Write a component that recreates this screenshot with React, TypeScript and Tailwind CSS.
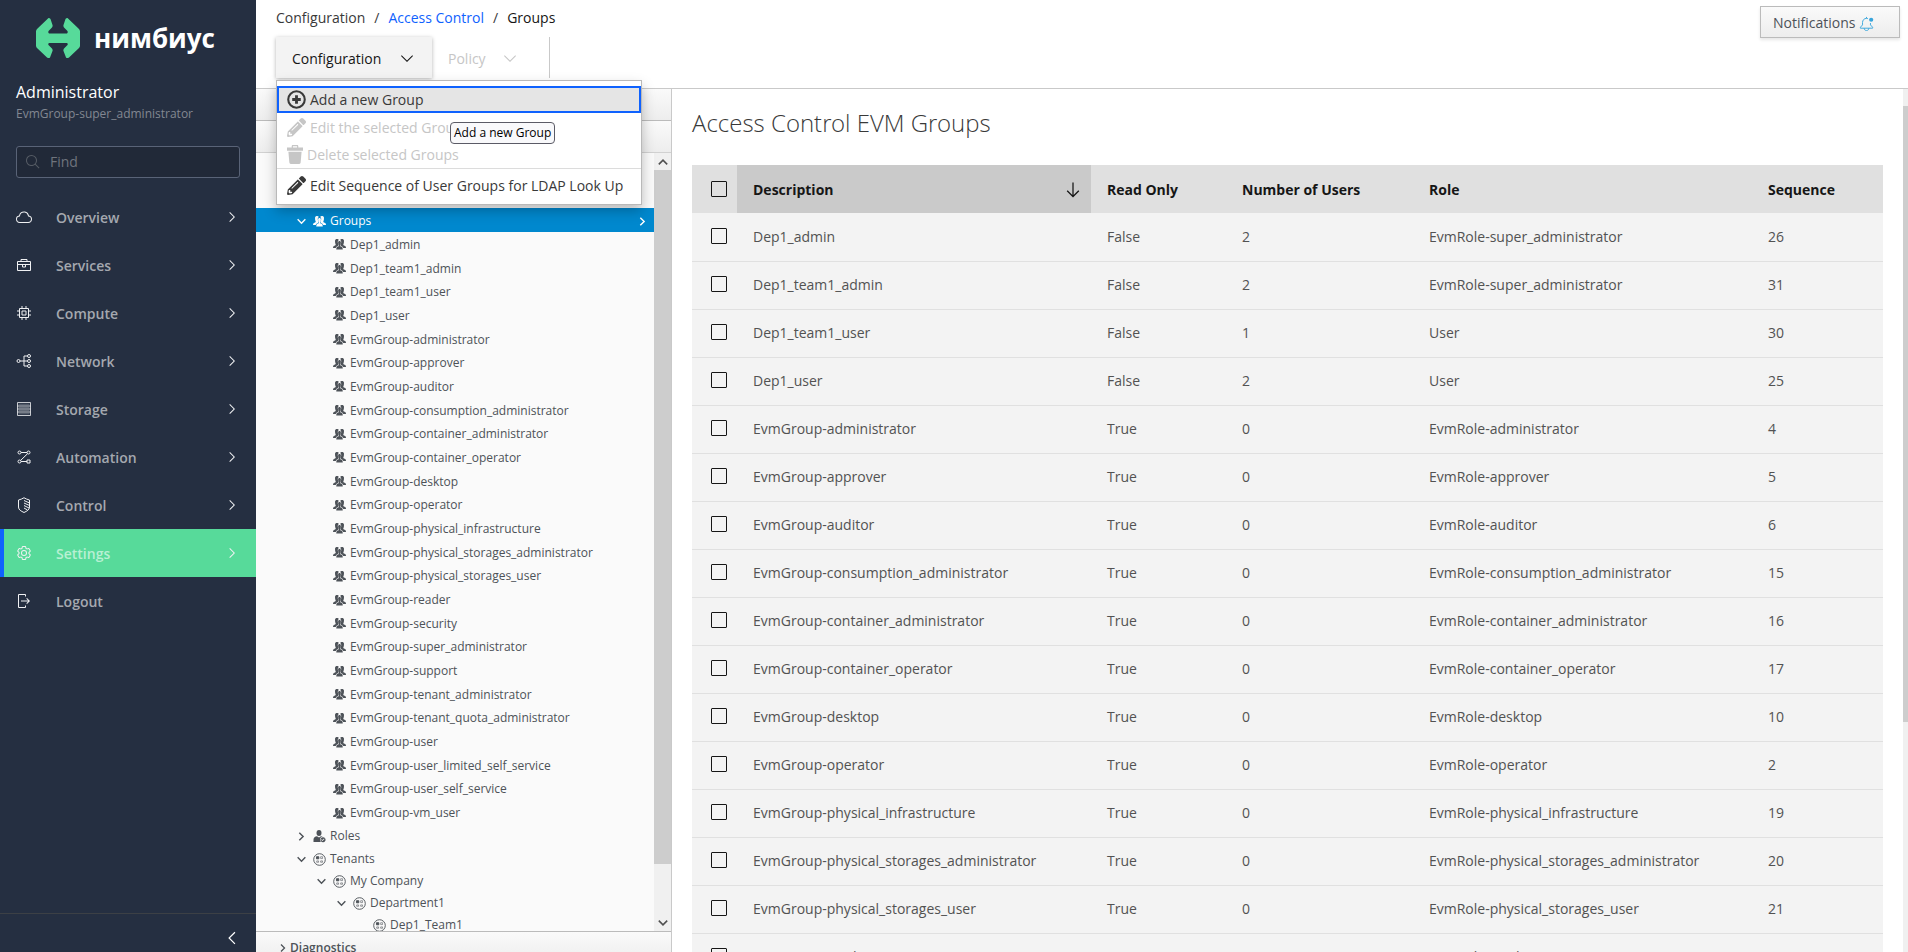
import React from 'react';
import { FaPencilAlt } from 'react-icons/fa';

type IconProps = { className?: string };

const CloudIcon = ({ className }: IconProps) => (
  <svg viewBox="0 0 32 32" fill="currentColor" className={className} aria-hidden="true">
    <path d="M16,7h0a7.66,7.66,0,0,1,1.51.15,8,8,0,0,1,6.35,6.34l.26,1.35,1.35.24a5.5,5.5,0,0,1-1,10.92H7.5a5.5,5.5,0,0,1-1-10.92l1.34-.24.26-1.35A8,8,0,0,1,16,7m0-2a10,10,0,0,0-9.83,8.12A7.5,7.5,0,0,0,7.49,28h17a7.5,7.5,0,0,0,1.32-14.88,10,10,0,0,0-7.94-7.94A10.27,10.27,0,0,0,16,5Z" />
  </svg>
);

const ToolboxIcon = ({ className }: IconProps) => (
  <svg viewBox="0 0 32 32" fill="none" stroke="currentColor" strokeWidth="2" className={className} aria-hidden="true">
    <path d="M3 9h26v18H3zM10 9V5h12v4M3 15h26M13 15v5h6v-5" />
  </svg>
);

const ChipIcon = ({ className }: IconProps) => (
  <svg viewBox="0 0 32 32" fill="none" stroke="currentColor" strokeWidth="2" className={className} aria-hidden="true">
    <path d="M7 7h18v18H7zM12 12h8v8h-8zM12 2v5M20 2v5M12 25v5M20 25v5M2 12h5M2 20h5M25 12h5M25 20h5" />
  </svg>
);

const NetworkIcon = ({ className }: IconProps) => (
  <svg viewBox="0 0 32 32" fill="none" stroke="currentColor" strokeWidth="2" className={className} aria-hidden="true">
    <circle cx="5" cy="16" r="3" />
    <circle cx="26" cy="6" r="3" />
    <circle cx="26" cy="16" r="3" />
    <circle cx="26" cy="26" r="3" />
    <path d="M8 16h15M23 6h-7v20h7" />
  </svg>
);

const StorageIcon = ({ className }: IconProps) => (
  <svg viewBox="0 0 32 32" fill="none" stroke="currentColor" strokeWidth="2" className={className} aria-hidden="true">
    <path d="M3 3h26v26H3zM3 10h26M3 16h26M3 22h26" opacity=".8" />
    <path d="M5 6.500h22M5 13h22M5 19h22M5 25.500h22" opacity=".3" />
  </svg>
);

const FlowIcon = ({ className }: IconProps) => (
  <svg viewBox="0 0 32 32" fill="none" stroke="currentColor" strokeWidth="2" className={className} aria-hidden="true">
    <circle cx="7" cy="7" r="3" />
    <circle cx="25" cy="7" r="3" />
    <circle cx="7" cy="25" r="3" />
    <path d="M10 7h12M10 25h12M23 9.500L9 23M22 22h6v6h-6z" />
  </svg>
);

const ShieldIcon = ({ className }: IconProps) => (
  <svg viewBox="0 0 32 32" fill="none" stroke="currentColor" strokeWidth="2" className={className} aria-hidden="true">
    <path d="M16 1.500c3 2 7 3.500 11 4.500v14c0 6-5 8-11 11C10 28 5 26 5 20V6c4-1 8-2.500 11-4.500z" />
    <path d="M16 7l11 5M16 12l11 5M16 17l10 5M16 22l7 4" />
  </svg>
);

const GearIcon = ({ className }: IconProps) => (
  <svg viewBox="0 0 32 32" fill="currentColor" className={className} aria-hidden="true">
    <path d="M27,16.76c0-.25,0-.5,0-.76s0-.51,0-.77l1.92-1.68A2,2,0,0,0,29.3,11L26.94,7a2,2,0,0,0-1.73-1,2,2,0,0,0-.64.1l-2.43.82a11.35,11.35,0,0,0-1.31-.75l-.51-2.52a2,2,0,0,0-2-1.61H13.64a2,2,0,0,0-2,1.61l-.51,2.52a11.48,11.48,0,0,0-1.32.75L7.43,6.06A2,2,0,0,0,6.79,6,2,2,0,0,0,5.06,7L2.7,11a2,2,0,0,0,.41,2.51L5,15.24c0,.25,0,.5,0,.76s0,.51,0,.77L3.11,18.45A2,2,0,0,0,2.7,21L5.06,25a2,2,0,0,0,1.73,1,2,2,0,0,0,.64-.1l2.43-.82a11.35,11.35,0,0,0,1.31.75l.51,2.52a2,2,0,0,0,2,1.61h4.72a2,2,0,0,0,2-1.61l.51-2.52a11.48,11.48,0,0,0,1.32-.75l2.42.82a2,2,0,0,0,.64.1,2,2,0,0,0,1.73-1L29.3,21a2,2,0,0,0-.41-2.51ZM25.21,24l-3.43-1.16a8.86,8.86,0,0,1-2.71,1.57L18.36,28H13.64l-.71-3.55a9.36,9.36,0,0,1-2.7-1.57L6.79,24,4.43,20l2.72-2.4a8.9,8.9,0,0,1,0-3.13L4.43,12,6.79,8l3.43,1.16a8.86,8.86,0,0,1,2.71-1.57L13.64,4h4.72l.71,3.55a9.36,9.36,0,0,1,2.7,1.57L25.21,8,27.57,12l-2.72,2.4a8.9,8.9,0,0,1,0,3.13L27.57,20Z" />
    <path d="M16,22a6,6,0,1,1,6-6A5.94,5.94,0,0,1,16,22Zm0-10a3.91,3.91,0,0,0-4,4,3.91,3.91,0,0,0,4,4,3.91,3.91,0,0,0,4-4A3.91,3.91,0,0,0,16,12Z" />
  </svg>
);

const LogoutIcon = ({ className }: IconProps) => (
  <svg viewBox="0 0 32 32" fill="currentColor" className={className} aria-hidden="true">
    <path d="M6,30H18a2,2,0,0,0,2-2V25H18v3H6V4H18V7h2V4a2,2,0,0,0-2-2H6A2,2,0,0,0,4,4V28A2,2,0,0,0,6,30Z" />
    <path d="M20.586 20.586L24.172 17 10 17 10 15 24.172 15 20.586 11.414 22 10 28 16 22 22 20.586 20.586z" />
  </svg>
);

const SearchIcon = ({ className }: IconProps) => (
  <svg viewBox="0 0 32 32" fill="currentColor" className={className} aria-hidden="true">
    <path d="M29,27.586l-7.552-7.552a11.018,11.018,0,1,0-1.414,1.414L27.586,29ZM4,13a9,9,0,1,1,9,9A9.01,9.01,0,0,1,4,13Z" />
  </svg>
);

const ChevronRight = ({ className }: IconProps) => (
  <svg viewBox="0 0 32 32" fill="currentColor" className={className} aria-hidden="true">
    <path d="M22 16L12 26 10.6 24.6 19.2 16 10.6 7.4 12 6z" />
  </svg>
);

const ChevronLeft = ({ className }: IconProps) => (
  <svg viewBox="0 0 32 32" fill="currentColor" className={className} aria-hidden="true">
    <path d="M10 16L20 6 21.4 7.4 12.8 16 21.4 24.6 20 26z" />
  </svg>
);

const ChevronDown = ({ className }: IconProps) => (
  <svg viewBox="0 0 16 16" fill="currentColor" className={className} aria-hidden="true">
    <path d="M8 11L2 5 2.700 4.300 8 9.600 13.300 4.300 14 5z" />
  </svg>
);

const ArrowDown = ({ className }: IconProps) => (
  <svg viewBox="0 0 32 32" fill="currentColor" className={className} aria-hidden="true">
    <path d="M24.59 16.59L17 24.17 17 4 15 4 15 24.17 7.41 16.59 6 18 16 28 26 18 24.59 16.59z" />
  </svg>
);

// Small bold angle used by the tree, the accordion and the scrollbars
const Angle = ({ className }: IconProps) => (
  <svg viewBox="0 0 10 10" fill="none" stroke="currentColor" strokeWidth="1.3" className={className} aria-hidden="true">
    <path d="M3 1.500L6.500 5 3 8.500" />
  </svg>
);

const BellIcon = ({ className }: IconProps) => (
  <svg viewBox="0 0 32 32" fill="none" stroke="currentColor" strokeWidth="2" className={className} aria-hidden="true">
    <path d="M19 5.600C18 5.200 17 5 16 5c-5 0-8.500 4-8.500 9v5L3 24v2h26v-2l-4.500-5v-4" />
    <path d="M11 26c0 3 2 5 5 5s5-2 5-5M16 5V2" />
    <circle cx="26" cy="8" r="4.500" fill="currentColor" stroke="none" />
  </svg>
);

const GroupIcon = ({ className }: IconProps) => (
  <svg viewBox="0 0 26 22" fill="currentColor" className={className} aria-hidden="true">
    <path d="M4 4c0-3 2-4 4-4 1.500 0 3 .7 3.600 2C10 3 9.400 4.600 9.600 7c.1 1.700.8 3 1.600 4-.2 2-.6 2.800-2 3.400-2 .9-3.200 1.600-3.700 3.600H0c0-3 1-4 3-4.700 1.500-.5 2.500-1 2.500-2C4.400 9.500 4 7 4 4z" />
    <path d="M22 4c0-3-2-4-4-4-1.500 0-3 .7-3.600 2C16 3 16.600 4.600 16.400 7c-.1 1.700-.8 3-1.600 4 .2 2 .6 2.800 2 3.400 2 .9 3.200 1.600 3.700 3.600H26c0-3-1-4-3-4.700-1.500-.5-2.500-1-2.500-2C21.600 9.500 22 7 22 4z" />
    <path d="M13 4c1.800 0 2.800 1.200 2.800 3.500 0 2-.6 3.700-1.600 4.800 0 2 .8 2.600 2.300 3.200 2 .8 3 2 3 5.500h-13c0-3.500 1-4.700 3-5.500 1.500-.6 2.300-1.200 2.300-3.200-1-1.100-1.600-2.800-1.600-4.800C10.200 5.200 11.200 4 13 4z" />
  </svg>
);

const RoleIcon = ({ className }: IconProps) => (
  <svg viewBox="0 0 24 26" fill="currentColor" className={className} aria-hidden="true">
    <ellipse cx="11" cy="6" rx="5" ry="6" />
    <path d="M0 24v-5c0-3.500 3-6 7-6.500l4 2.500 4-2.500c1.400.2 2.600.6 3.700 1.200-3.500.3-5.700 2.300-5.700 5.300 0 2 .7 3.800 2 5z" />
    <path d="M19 14.500a5 5 0 1 0 .1 0zm-1 7.500l-2.500-2.500 1-1 1.500 1.500 3-3 1 1z" fillRule="evenodd" />
  </svg>
);

const TenantIcon = ({ className }: IconProps) => (
  <svg viewBox="0 0 28 28" fill="none" stroke="currentColor" strokeWidth="2" className={className} aria-hidden="true">
    <circle cx="14" cy="14" r="12.500" />
    <path d="M7.500 8h5v4.500h-5z" fill="currentColor" />
    <path d="M16.500 8h4v4h-4zM8 17h4v3H8zM16.500 17h4v3h-4z" strokeWidth="1.200" />
  </svg>
);

const AddCircleIcon = ({ className }: IconProps) => (
  <svg viewBox="0 0 20 20" fill="none" stroke="currentColor" className={className} aria-hidden="true">
    <circle cx="10" cy="10" r="8.700" strokeWidth="2.200" />
    <path d="M10 5.500v9M5.500 10h9" strokeWidth="3" />
  </svg>
);

const TrashIcon = ({ className }: IconProps) => (
  <svg viewBox="0 0 17 20" fill="currentColor" className={className} aria-hidden="true">
    <path d="M0 2.500h5V1.200C5 .5 5.500 0 6.200 0h4.600c.7 0 1.200.5 1.200 1.200v1.300h5V6H0zM6.300 1.300v1.200h4.400V1.300z" fillRule="evenodd" />
    <path d="M1.500 7h14l-1 11.500c-.1.900-.7 1.500-1.500 1.500H4c-.8 0-1.400-.6-1.500-1.500z" />
  </svg>
);

const menu = [
  { label: 'Overview', icon: CloudIcon },
  { label: 'Services', icon: ToolboxIcon },
  { label: 'Compute', icon: ChipIcon },
  { label: 'Network', icon: NetworkIcon },
  { label: 'Storage', icon: StorageIcon },
  { label: 'Automation', icon: FlowIcon },
  { label: 'Control', icon: ShieldIcon },
  { label: 'Settings', icon: GearIcon, active: true },
  { label: 'Logout', icon: LogoutIcon, leaf: true },
];

const groups = [
  'Dep1_admin',
  'Dep1_team1_admin',
  'Dep1_team1_user',
  'Dep1_user',
  'EvmGroup-administrator',
  'EvmGroup-approver',
  'EvmGroup-auditor',
  'EvmGroup-consumption_administrator',
  'EvmGroup-container_administrator',
  'EvmGroup-container_operator',
  'EvmGroup-desktop',
  'EvmGroup-operator',
  'EvmGroup-physical_infrastructure',
  'EvmGroup-physical_storages_administrator',
  'EvmGroup-physical_storages_user',
  'EvmGroup-reader',
  'EvmGroup-security',
  'EvmGroup-super_administrator',
  'EvmGroup-support',
  'EvmGroup-tenant_administrator',
  'EvmGroup-tenant_quota_administrator',
  'EvmGroup-user',
  'EvmGroup-user_limited_self_service',
  'EvmGroup-user_self_service',
  'EvmGroup-vm_user',
];

const rows = [
  ['Dep1_admin', 'False', '2', 'EvmRole-super_administrator', '26'],
  ['Dep1_team1_admin', 'False', '2', 'EvmRole-super_administrator', '31'],
  ['Dep1_team1_user', 'False', '1', 'User', '30'],
  ['Dep1_user', 'False', '2', 'User', '25'],
  ['EvmGroup-administrator', 'True', '0', 'EvmRole-administrator', '4'],
  ['EvmGroup-approver', 'True', '0', 'EvmRole-approver', '5'],
  ['EvmGroup-auditor', 'True', '0', 'EvmRole-auditor', '6'],
  ['EvmGroup-consumption_administrator', 'True', '0', 'EvmRole-consumption_administrator', '15'],
  ['EvmGroup-container_administrator', 'True', '0', 'EvmRole-container_administrator', '16'],
  ['EvmGroup-container_operator', 'True', '0', 'EvmRole-container_operator', '17'],
  ['EvmGroup-desktop', 'True', '0', 'EvmRole-desktop', '10'],
  ['EvmGroup-operator', 'True', '0', 'EvmRole-operator', '2'],
  ['EvmGroup-physical_infrastructure', 'True', '0', 'EvmRole-physical_infrastructure', '19'],
  ['EvmGroup-physical_storages_administrator', 'True', '0', 'EvmRole-physical_storages_administrator', '20'],
  ['EvmGroup-physical_storages_user', 'True', '0', 'EvmRole-physical_storages_user', '21'],
  ['EvmGroup-reader', 'True', '0', 'EvmRole-reader', ''],
];

const Sidebar: React.FC = () => (
  <aside className="flex w-64 shrink-0 flex-col bg-[#252f41]">
    <div className="flex items-center gap-[14px] pl-9 pt-[18px]">
      <svg viewBox="0 0 44 40" className="h-10 w-11" fill="#57da9a" aria-hidden="true">
        <path d="M12.500 0q1.500 0 2 1l2 6q.5 1.700-1 3L13 12.500q-1.500 1.500 0 3h18q1.500-1.500 0-3L28.500 10q-1.500-1.300-1-3l2-6q.5-1 2-1L43 11q1 1 1 2.500v14q0 1.500-1 2.500L33 39.500q-2 1-3 0l-2.500-6.500q-.5-1.700 1-3l2.500-2.500q1.500-1.500 0-2.500H13q-1.500 1 0 2.500l2.500 2.500q1.500 1.300 1 3L14 39.500q-1 1-3 0L1 30q-1-1-1-2.500v-14Q0 12 1 11z" />
      </svg>
      <span className="text-[26px] leading-10 font-bold text-white">нимбиус</span>
    </div>

    <div className="mt-5 px-4">
      <p className="text-base leading-7 text-white">Administrator</p>
      <p className="text-xs leading-4 text-[#828791]">EvmGroup-super_administrator</p>
    </div>

    <label className="mx-4 mt-6 flex h-8 items-center gap-[9px] rounded-[3px] border border-[#596377] bg-[#212938] px-2">
      <SearchIcon className="h-4 w-4 shrink-0 text-[#555b64]" />
      <input
        type="search"
        aria-label="Find"
        placeholder="Find"
        className="w-full bg-transparent text-sm outline-none placeholder:text-[#6f747d]"
      />
    </label>

    <nav className="mt-[15px]">
      {menu.map(({ label, icon: Icon, active, leaf }) => (
        <a
          key={label}
          href="#"
          className={
            active
              ? 'flex h-12 items-center border-l-4 border-[#0f62fe] bg-[#57da9a] pr-4 pl-3 text-[#b8f0d3]'
              : 'flex h-12 items-center pr-4 pl-4 text-[#a4a8af]'
          }
        >
          <Icon className="h-4 w-4 text-[#f0f1f3]" />
          <span className="ml-6 flex-1 pt-0.5 text-sm font-semibold">{label}</span>
          {!leaf && <ChevronRight className="h-4 w-4 text-[#f0f1f3]" />}
        </a>
      ))}
    </nav>

    <button type="button" aria-label="Collapse menu" className="mt-auto flex h-[39px] items-center justify-end border-t border-[#3c4045] pt-2.5 pr-[14px] text-white">
      <ChevronLeft className="h-5 w-5" />
    </button>
  </aside>
);

const ConfigurationMenu: React.FC = () => (
  <div className="absolute top-full left-0 z-10 mt-0.5 flex w-[366px] flex-col border border-[#b9b9b9] bg-white pt-[5px] text-sm text-[#393939] shadow-[0_6px_12px_rgba(0,0,0,0.25)]">
    <button type="button" className="flex h-[27px] items-center gap-1 border-2 border-[#0f62fe] bg-[#e5e5e5] px-2">
      <AddCircleIcon className="h-[19px] w-[19px]" />
      Add a new Group
    </button>
    <button type="button" disabled className="mt-px flex h-[27px] items-center gap-1 px-[10px] text-[#c6c6c6]">
      <FaPencilAlt className="h-[19px] w-[19px]" />
      Edit the selected Group
    </button>
    <button type="button" disabled className="flex h-[27px] items-center gap-1 px-[10px] text-[#c6c6c6]">
      <TrashIcon className="h-[19px] w-4" />
      Delete selected Groups
    </button>
    <div className="border-t border-[#dcdcdc] pt-[3px] pb-[5px]">
      <button type="button" className="flex h-[27px] items-center gap-1 px-[10px]">
        <FaPencilAlt className="h-[19px] w-[19px]" />
        Edit Sequence of User Groups for LDAP Look Up
      </button>
    </div>
    <span role="tooltip" className="absolute top-[41px] left-[173px] rounded border border-[#5b5b66] bg-[#f9f9fb] px-[3px] text-xs leading-5 whitespace-nowrap text-black">
      Add a new Group
    </span>
  </div>
);

const Header: React.FC = () => (
  <header className="flex h-[89px] shrink-0 items-start justify-between border-b border-[#c9c9c9] bg-white pl-5">
    <div>
      <nav aria-label="Breadcrumb" className="flex h-[37px] items-center gap-[9px] pb-0.5 text-sm text-[#393939]">
        <span>Configuration</span>
        <span>/</span>
        <a href="#" className="text-[#0f62fe]">
          Access Control
        </a>
        <span>/</span>
        <span className="text-[#161616]">Groups</span>
      </nav>
      <div className="flex h-[41px] w-[274px] items-stretch border-r border-[#c9c9c9] text-sm">
        <div className="relative flex">
          <button type="button" className="flex w-[156px] items-center justify-between bg-[#f3f3f3] pt-0.5 pr-[17px] pl-4 text-[#161616] shadow-[0_1px_4px_rgba(0,0,0,0.3)]">
            Configuration
            <ChevronDown className="h-4 w-4" />
          </button>
          <ConfigurationMenu />
        </div>
        <button type="button" disabled className="flex w-[102px] items-center justify-between px-4 pt-0.5 text-[#c6c6c6]">
          Policy
          <ChevronDown className="h-4 w-4" />
        </button>
      </div>
    </div>
    <button type="button" className="mt-1.5 mr-2 flex h-8 w-[140px] items-center gap-1 border border-[#bbb] bg-linear-to-b from-[#fafafa] to-[#ededed] px-3 pt-0.5 text-sm text-[#4d5258] shadow-[0_2px_3px_rgba(3,3,3,0.1)]">
      Notifications
      <BellIcon className="h-[15px] w-[15px] text-[#39a5dc]" />
    </button>
  </header>
);

const Tree: React.FC = () => (
  <section className="flex w-[416px] shrink-0 flex-col border-r border-[#c9c9c9] bg-[#fafafa] text-xs text-[#4d5258]">
    <div className="h-8 shrink-0 border-b border-[#bbb] bg-linear-to-b from-[#fafafa] to-[#ededed]" />
    <div className="h-8 shrink-0 border-b border-[#d1d1d1] bg-linear-to-b from-[#fafafa] to-[#ededed]" />

    <div className="flex min-h-0 flex-1">
      <div className="min-w-0 flex-1 overflow-hidden pt-[55px]">
        <div className="flex h-6 items-center bg-[#0088ce] pt-0.5 pr-1.5 pl-10 text-white">
          <Angle className="mr-1.5 h-[11px] w-[11px] rotate-90" />
          <GroupIcon className="mr-1 h-[11px] w-[13px]" />
          <span className="flex-1">Groups</span>
          <Angle className="h-[11px] w-[11px]" />
        </div>
        <ul className="grid h-[592px] auto-rows-fr">
          {groups.map((name) => (
            <li key={name} className="flex items-center gap-1 pt-0.5 pl-[77px]">
              <GroupIcon className="h-[11px] w-[13px]" />
              {name}
            </li>
          ))}
        </ul>
        <div className="flex h-6 items-center pl-10">
          <Angle className="mr-1.5 h-[11px] w-[11px]" />
          <RoleIcon className="mr-1 h-[13px] w-[13px]" />
          Roles
        </div>
        <div className="flex h-[22px] items-center pl-10">
          <Angle className="mr-1.5 h-[11px] w-[11px] rotate-90" />
          <TenantIcon className="mr-1 h-[13px] w-[13px]" />
          Tenants
        </div>
        <div className="flex h-[22px] items-center pl-[60px]">
          <Angle className="mr-1.5 h-[11px] w-[11px] rotate-90" />
          <TenantIcon className="mr-1 h-[13px] w-[13px]" />
          My Company
        </div>
        <div className="flex h-[22px] items-center pl-20">
          <Angle className="mr-1.5 h-[11px] w-[11px] rotate-90" />
          <TenantIcon className="mr-1 h-[13px] w-[13px]" />
          Department1
        </div>
        <div className="flex h-[22px] items-center pl-[117px]">
          <TenantIcon className="mr-1 h-[13px] w-[13px]" />
          Dep1_Team1
        </div>
      </div>

      <div className="flex w-[17px] flex-col items-center bg-[#f0f0f0] text-[#505050]">
        <div className="flex h-[17px] items-center">
          <Angle className="h-3 w-3 -rotate-90" />
        </div>
        <div className="w-full flex-[694] bg-[#cdcdcd]" />
        <div className="flex-[50]" />
        <div className="flex h-[17px] items-center">
          <Angle className="h-3 w-3 rotate-90" />
        </div>
      </div>
    </div>

    <div className="h-[21px] shrink-0">
      <button type="button" className="flex h-8 w-full items-center gap-0.5 border-t border-[#bbb] bg-linear-to-b from-[#fafafa] to-[#ededed] pl-[22px] font-semibold">
        <Angle className="h-[10px] w-[10px]" />
        Diagnostics
      </button>
    </div>
  </section>
);

const Checkbox = ({ label }: { label: string }) => (
  <input
    type="checkbox"
    aria-label={label}
    className="block h-4 w-4 appearance-none rounded-[1px] border border-[#161616]"
  />
);

const GroupsTable: React.FC = () => (
  <section className="min-w-0 flex-1 overflow-hidden bg-white px-5">
    <h1 className="pt-[18px] font-['Open_Sans_Light','Open_Sans',sans-serif] text-2xl leading-8 font-light text-[#393939]">
      Access Control EVM Groups
    </h1>
    <table className="mt-[26px] w-full table-fixed text-left text-sm">
      <colgroup>
        <col className="w-[45px]" />
        <col />
        <col className="w-[135px]" />
        <col className="w-[187px]" />
        <col className="w-[339px]" />
        <col className="w-[131px]" />
      </colgroup>
      <thead>
        <tr className="h-12 bg-[#e0e0e0] text-[#161616]">
          <th className="pl-[19px]">
            <Checkbox label="Select all" />
          </th>
          <th className="bg-[#cacaca] px-4 pt-0.5" aria-sort="ascending">
            <div className="flex items-center justify-between">
              Description
              <ArrowDown className="-mr-2 h-5 w-5" />
            </div>
          </th>
          <th className="px-4 pt-0.5">Read Only</th>
          <th className="px-4 pt-0.5">Number of Users</th>
          <th className="px-4 pt-0.5">Role</th>
          <th className="px-4 pt-0.5">Sequence</th>
        </tr>
      </thead>
      <tbody>
        {rows.map(([name, readOnly, users, role, sequence]) => (
          <tr key={name} className="h-12 border-b border-[#e0e0e0] bg-[#f3f3f3] text-[#525252]">
            <td className="pb-0.5 pl-[19px]">
              <Checkbox label={name} />
            </td>
            <td className="px-4">{name}</td>
            <td className="px-4">{readOnly}</td>
            <td className="px-4">{users}</td>
            <td className="px-4">{role}</td>
            <td className="px-4">{sequence}</td>
          </tr>
        ))}
      </tbody>
    </table>
  </section>
);

const App: React.FC = () => {
  return (
    <div className="flex h-screen overflow-hidden font-['Open_Sans',sans-serif]">
      <Sidebar />
      <main className="flex min-w-0 flex-1 flex-col">
        <Header />
        <div className="flex min-h-0 flex-1">
          <Tree />
          <GroupsTable />
          <div className="flex w-[5px] shrink-0 flex-col bg-[#f0f0f0] pt-[17px]">
            <div className="flex-[616] bg-[#cdcdcd]" />
            <div className="flex-[230]" />
          </div>
        </div>
      </main>
    </div>
  );
};

export default App;
